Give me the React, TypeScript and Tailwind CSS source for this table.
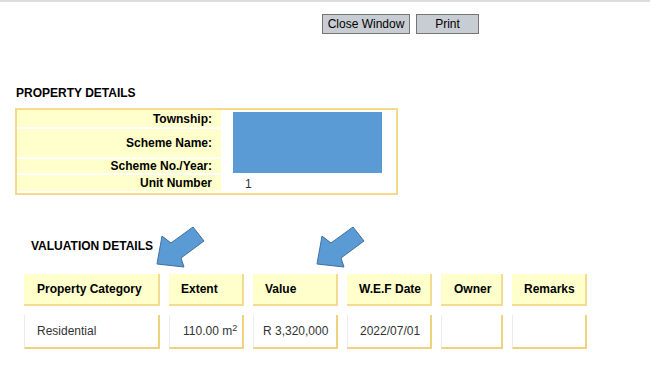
import React from 'react';

const labelRows = [
  { label: 'Township:', h: 'h-[17px]' },
  { label: 'Scheme Name:', h: 'h-[28px]' },
  { label: 'Scheme No./Year:', h: 'h-[14px]' },
];

const columns = [
  { title: 'Property Category', w: 'w-[136px]', head: 'pl-[13px]', cell: 'pl-[12px]', value: 'Residential' },
  { title: 'Extent', w: 'w-[75px]', head: 'pl-[12px]', cell: 'pl-[13px]', value: 'extent' },
  { title: 'Value', w: 'w-[85px]', head: 'pl-[12px]', cell: 'pl-[9px]', value: 'R 3,320,000' },
  { title: 'W.E.F Date', w: 'w-[85px]', head: 'pl-[12px]', cell: 'pl-[12px]', value: '2022/07/01' },
  { title: 'Owner', w: 'w-[62px]', head: 'pl-[13px]', cell: 'pl-[12px]', value: '' },
  { title: 'Remarks', w: 'w-[75px]', head: 'pl-[12px]', cell: 'pl-[12px]', value: '' },
];

// callout arrow pointing down-left
const Arrow: React.FC<{ className: string }> = ({ className }) => (
  <svg className={className} width="60" height="50" viewBox="0 0 60 50">
    <polygon
      points="7,42 12,14 21,21 43,5 54,19 31,36 34,45"
      fill="#5b9bd5"
      stroke="#41719c"
      strokeWidth="1"
      strokeLinejoin="miter"
    />
  </svg>
);

const App: React.FC = () => {
  return (
    <div className="relative h-[366px] w-[650px] overflow-hidden bg-white font-['Liberation_Sans',Arial,sans-serif] text-[12px] text-black">
      <div className="h-[2px] bg-[#dcdcdc]" />

      <div className="mt-[12px] flex gap-[6px] pl-[322px]">
        <button className="h-[20px] w-[88px] border border-[#767676] bg-[#c8cdd3] text-[12px] leading-[18px]">
          Close Window
        </button>
        <button className="h-[20px] w-[63px] border border-[#767676] bg-[#c8cdd3] text-[12px] leading-[18px]">
          Print
        </button>
      </div>

      <h2 className="ml-[16px] mt-[52px] h-[14px] text-[12px] font-bold leading-[14px]">PROPERTY DETAILS</h2>

      <div className="ml-[15px] mt-[8px] grid w-[383px] grid-cols-[204px_1fr] gap-y-[2px] border-2 border-[#f6d98a]">
        {labelRows.map((r, i) => (
          <div
            key={r.label}
            className={`${r.h} col-start-1 flex items-center justify-end bg-[#ffffcc] pr-[9px] font-bold`}
            style={{ gridRowStart: i + 1 }}
          >
            {r.label}
          </div>
        ))}
        <div className="col-start-2 row-span-3 row-start-1 pl-[12px] pt-[2px]">
          <div className="h-[61px] w-[149px] bg-[#5b9bd5]" />
        </div>
        <div className="col-start-1 row-start-4 flex h-[16px] items-center justify-end bg-[#ffffcc] pr-[9px] font-bold">
          Unit Number
        </div>
        <div className="col-start-2 row-start-4 flex items-center pl-[24px] text-[#333]">1</div>
      </div>

      <h2 className="ml-[31px] mt-[44px] h-[14px] text-[12px] font-bold leading-[14px]">VALUATION DETAILS</h2>

      <div className="ml-[24px] mt-[21px] flex flex-col gap-[9px]">
        <div className="flex gap-[9px]">
          {columns.map((c) => (
            <div
              key={c.title}
              className={`${c.w} ${c.head} flex h-[32px] items-center border-b-2 border-r-2 border-[#f3dc92] bg-[#ffffcc] font-bold`}
            >
              {c.title}
            </div>
          ))}
        </div>
        <div className="flex gap-[9px]">
          {columns.map((c) => (
            <div
              key={c.title}
              className={`${c.w} ${c.cell} flex h-[34px] items-center border-b-2 border-l border-r-2 border-[#f0d27c] border-l-[#ececec] bg-white text-[#333]`}
            >
              {c.value === 'extent' ? (
                <span>
                  110.00 m<sup className="text-[9px]">2</sup>
                </span>
              ) : (
                c.value
              )}
            </div>
          ))}
        </div>
      </div>

      <Arrow className="absolute left-[150px] top-[222px]" />
      <Arrow className="absolute left-[310px] top-[222px]" />
    </div>
  );
};

export default App;
